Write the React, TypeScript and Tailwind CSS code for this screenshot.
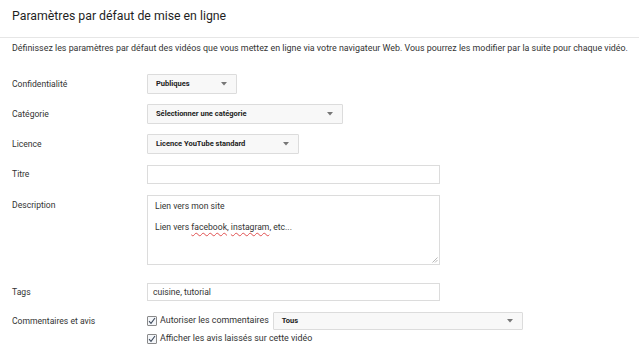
import React from "react";

function Arrow() {
  return (
    <svg width="6" height="4" viewBox="0 0 6 4" className="shrink-0">
      <path d="M0 0 H6 L3 3.5 Z" fill="#777" />
    </svg>
  );
}

function Select({ label, width }: { label: string; width: string }) {
  return (
    <div
      className={`${width} h-full flex items-center justify-between pl-[8px] pr-[9px] bg-[#f8f8f8] border border-[#dcdcdc] rounded-[1px]`}
    >
      <span className="text-[7.5px] font-bold text-[#222] whitespace-nowrap">{label}</span>
      <Arrow />
    </div>
  );
}

function Check() {
  return (
    <div className="w-[10px] h-[10px] border border-[#8a8a8a] rounded-[1px] bg-[#f4f6f9] flex items-center justify-center shrink-0">
      <svg width="8" height="8" viewBox="0 0 8 8">
        <path d="M1 4.2 L3 6.3 L7 1" fill="none" stroke="#3d4a5c" strokeWidth="1.1" />
      </svg>
    </div>
  );
}

export default function App() {
  return (
    <div className="w-[639px] h-[359px] bg-white overflow-hidden text-[#333] font-['Roboto',_'Liberation_Sans',_sans-serif]">
      <div className="h-[38px] border-b border-[#e6e6e6] pl-3 pt-[9px]">
        <div className="text-[12.3px] leading-[14px] text-[#1f1f1f]">Paramètres par défaut de mise en ligne</div>
      </div>
      <div className="pl-3 mt-[3px] text-[8.9px] leading-[14px] text-[#333] whitespace-nowrap">
        Définissez les paramètres par défaut des vidéos que vous mettez en ligne via votre navigateur Web. Vous pourrez les modifier par la suite pour chaque vidéo.
      </div>

      <div className="pl-3 mt-[19px] flex flex-col text-[8.6px]">
        <div className="flex items-center h-[20px]">
          <div className="w-[135px]">Confidentialité</div>
          <Select label="Publiques" width="w-[90px]" />
        </div>
        <div className="flex items-center h-[20px] mt-[10px]">
          <div className="w-[135px]">Catégorie</div>
          <Select label="Sélectionner une catégorie" width="w-[196px]" />
        </div>
        <div className="flex items-center h-[20px] mt-[10px]">
          <div className="w-[135px]">Licence</div>
          <Select label="Licence YouTube standard" width="w-[152px]" />
        </div>
        <div className="flex items-center h-[19px] mt-[11px]">
          <div className="w-[135px]">Titre</div>
          <div className="w-[293px] h-full border border-[#dcdcdc] bg-white" />
        </div>
        <div className="flex items-start h-[70px] mt-[11px]">
          <div className="w-[135px] pt-[3px] leading-[14px]">Description</div>
          <div className="relative w-[293px] h-full border border-[#dcdcdc] bg-white pl-[7px] pt-[3px] text-[#333] leading-[14px]">
            <div>Lien vers mon site</div>
            <div className="mt-[7px]">
              Lien vers{" "}
              <span className="underline decoration-wavy decoration-[#e05050] decoration-[0.5px] underline-offset-[2px]">facebook</span>,{" "}
              <span className="underline decoration-wavy decoration-[#e05050] decoration-[0.5px] underline-offset-[2px]">instagram</span>, etc...
            </div>
            <svg width="6" height="6" viewBox="0 0 6 6" className="absolute right-[1px] bottom-[1px]">
              <path d="M0.5 5.5 L5.5 0.5 M3 5.5 L5.5 3" stroke="#999" strokeWidth="0.7" />
            </svg>
          </div>
        </div>
        <div className="flex items-center h-[18px] mt-[18px]">
          <div className="w-[135px]">Tags</div>
          <div className="w-[293px] h-full border border-[#dcdcdc] bg-white flex items-center pl-[5px] text-[#333]">
            cuisine, tutorial
          </div>
        </div>
        <div className="flex items-center h-[18px] mt-[11px]">
          <div className="w-[135px]">Commentaires et avis</div>
          <Check />
          <span className="ml-[3px] whitespace-nowrap text-[8.9px]">Autoriser les commentaires</span>
          <div className="ml-[4px] h-full">
            <Select label="Tous" width="w-[250px]" />
          </div>
        </div>
        <div className="flex items-center h-[14px] mt-[2px]">
          <div className="w-[135px]" />
          <Check />
          <span className="ml-[3px] whitespace-nowrap text-[8.9px]">Afficher les avis laissés sur cette vidéo</span>
        </div>
      </div>
    </div>
  );
}
